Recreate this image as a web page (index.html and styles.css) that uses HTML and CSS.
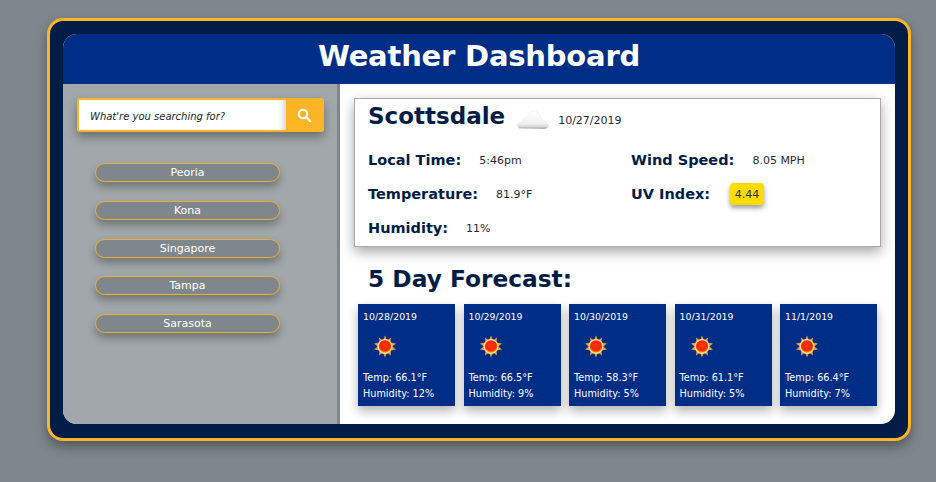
FILE: index.html
```html
<!DOCTYPE html>
<html lang="en">
<head>
<meta charset="utf-8">
<title>Weather Dashboard</title>
<link rel="stylesheet" href="styles.css">
</head>
<body>
<svg class="defs" width="0" height="0" aria-hidden="true">
  <defs>
    <radialGradient id="sunCore" cx="50%" cy="40%" r="60%">
      <stop offset="0" stop-color="#ff3a00"/>
      <stop offset="0.7" stop-color="#f52400"/>
      <stop offset="1" stop-color="#ffb000"/>
    </radialGradient>
    <linearGradient id="cloudFill" x1="0" y1="0" x2="0" y2="1">
      <stop offset="0" stop-color="#ffffff"/>
      <stop offset="0.7" stop-color="#f0f0f0"/>
      <stop offset="0.88" stop-color="#d8d8d8"/>
      <stop offset="1" stop-color="#8c8c8c"/>
    </linearGradient>
    <symbol id="sun" viewBox="0 0 24 24">
      <path d="M12 1l2 5 4-3-.6 5 5.600 1-3.800 3 3.800 3-5.600 1 .6 5-4-3-2 5-2-5-4 3 .6-5-5.600-1 3.800-3-3.800-3 5.600-1-.6-5 4 3z" fill="#e8a23c" transform="translate(0 -.5)"/>
      <circle cx="12" cy="11.500" r="7.400" fill="#ffe0a0"/>
      <circle cx="12" cy="11.500" r="6.200" fill="url(#sunCore)"/>
    </symbol>
  </defs>
</svg>
<main class="frame">
  <div class="inner">
    <header class="title-bar"><h1>Weather Dashboard</h1></header>
    <div class="columns">
      <aside class="sidebar">
        <form class="search">
          <div class="search-input">What're you searching for?</div>
          <div class="search-btn">
            <svg width="14" height="14" viewBox="0 0 14 14" aria-hidden="true">
              <circle cx="6" cy="6" r="4.200" fill="none" stroke="#fff" stroke-width="2"/>
              <path d="M9 9l4 4" stroke="#fff" stroke-width="2.400" stroke-linecap="round"/>
            </svg>
          </div>
        </form>
        <ul class="cities">
          <li class="city">Peoria</li>
          <li class="city">Kona</li>
          <li class="city">Singapore</li>
          <li class="city">Tampa</li>
          <li class="city">Sarasota</li>
        </ul>
      </aside>
      <section class="content">
        <div class="today">
          <div class="today-head">
            <h2>Scottsdale</h2>
            <svg class="cloud" width="32" height="22" viewBox="0 0 32 22" aria-hidden="true">
              <path d="M3.500 20.500C1.500 20.500.5 19 .5 17.500c0-2 2-3.500 4.500-3.800C6 10.500 8 9 10 9 11.500 5 14 3 17 3c3.500 0 6 2.500 7 6.500 1 1 1.500 2 1.600 3.500 3 .2 5.900 1.500 5.900 4.500 0 2-1.500 3.500-4.500 3.500z" fill="url(#cloudFill)" stroke="#ececec" stroke-width=".6"/>
            </svg>
            <span class="value date">10/27/2019</span>
          </div>
          <div class="stats">
            <div class="stat"><span class="label">Local Time:</span><span class="value">5:46pm</span></div>
            <div class="stat"><span class="label">Wind Speed:</span><span class="value">8.05 MPH</span></div>
            <div class="stat"><span class="label">Temperature:</span><span class="value">81.9°F</span></div>
            <div class="stat"><span class="label">UV Index:</span><span class="uv">4.44</span></div>
            <div class="stat"><span class="label">Humidity:</span><span class="value">11%</span></div>
          </div>
        </div>
        <h2 class="forecast-title">5 Day Forecast:</h2>
        <div class="forecast">
          <article class="day"><p class="day-date">10/28/2019</p><svg class="sun" width="24" height="24" aria-hidden="true"><use href="#sun"/></svg><p>Temp: 66.1°F</p><p>Humidity: 12%</p></article>
          <article class="day"><p class="day-date">10/29/2019</p><svg class="sun" width="24" height="24" aria-hidden="true"><use href="#sun"/></svg><p>Temp: 66.5°F</p><p>Humidity: 9%</p></article>
          <article class="day"><p class="day-date">10/30/2019</p><svg class="sun" width="24" height="24" aria-hidden="true"><use href="#sun"/></svg><p>Temp: 58.3°F</p><p>Humidity: 5%</p></article>
          <article class="day"><p class="day-date">10/31/2019</p><svg class="sun" width="24" height="24" aria-hidden="true"><use href="#sun"/></svg><p>Temp: 61.1°F</p><p>Humidity: 5%</p></article>
          <article class="day"><p class="day-date">11/1/2019</p><svg class="sun" width="24" height="24" aria-hidden="true"><use href="#sun"/></svg><p>Temp: 66.4°F</p><p>Humidity: 7%</p></article>
        </div>
      </section>
    </div>
  </div>
</main>
</body>
</html>
```
FILE: styles.css
```css
* { box-sizing: border-box; }
html, body { margin: 0; padding: 0; height: 100%; }
body {
  background: #7f878c;
  font-family: "DejaVu Sans", Verdana, sans-serif;
  overflow: hidden;
  padding: 18px 25px 0 47px;
}
.defs { position: absolute; }
.frame {
  height: 423px;
  border: 3px solid #fdb526;
  border-radius: 16px;
  background: #021d45;
  padding: 13px 13px 14px;
  box-shadow: 0 6px 12px rgba(0,0,0,.35);
}
.inner {
  height: 100%;
  border-radius: 14px;
  overflow: hidden;
  display: flex;
  flex-direction: column;
  background: #fff;
}
.title-bar {
  height: 50px;
  flex: none;
  background: #002e86;
  display: flex;
  align-items: center;
  justify-content: center;
  padding-bottom: 6px;
}
h1 {
  margin: 0;
  color: #fff;
  font-size: 29px;
  font-weight: 700;
  letter-spacing: -.2px;
}
.columns { flex: 1; display: flex; min-height: 0; }
.sidebar {
  width: 277px;
  flex: none;
  background: #a1a7aa;
  border-right: 3px solid #7f878c;
  padding: 14px 14px 0;
}
.search {
  display: flex;
  height: 34px;
  width: 247px;
  border: 2px solid #fdb526;
  border-radius: 3px;
  box-shadow: 0 5px 10px rgba(0,0,0,.35);
}
.search-input {
  flex: 1;
  background: #fff;
  padding: 1px 11px 0;
  font-size: 10px;
  font-style: italic;
  color: #1a1f29;
  line-height: 32px;
  box-shadow: inset -6px 0 6px -4px rgba(0,0,0,.2);
}
.search-btn {
  width: 36px;
  background: #fdb526;
  display: flex;
  align-items: center;
  justify-content: center;
}
.cities {
  list-style: none;
  margin: 31px 0 0 18px;
  padding: 0;
  display: flex;
  flex-direction: column;
  gap: 18.800px;
}
.city {
  width: 185px;
  height: 19px;
  border: 1px solid #eeb02e;
  border-radius: 10px;
  background: #7f878c;
  color: #fff;
  font-size: 11px;
  line-height: 17px;
  text-align: center;
  box-shadow: 0 5px 8px rgba(0,0,0,.3);
}
.content {
  flex: 1;
  padding: 14px 14px 0;
  min-width: 0;
}
.today {
  height: 149px;
  border: 1px solid #a8a8a8;
  background: #fff;
  padding: 0 13px;
  box-shadow: 0 5px 12px rgba(0,0,0,.35);
  color: #021d45;
}
.today-head { display: flex; align-items: center; height: 34px; }
h2 {
  margin: 0;
  font-size: 23px;
  font-weight: 700;
  color: #021d45;
}
.cloud { margin: 6px 0 0 12px; }
.date { margin: 9px 0 0 9px; }
.value { font-size: 11px; color: #1f2937; }
.stats {
  display: grid;
  grid-template-columns: 263px 1fr;
  grid-auto-rows: 34px;
  margin-top: 10px;
}
.stat { display: flex; align-items: center; height: 34px; }
.label {
  font-size: 14.500px;
  font-weight: 700;
  color: #021d45;
  margin-right: 18px;
}
.uv {
  background: #ffdb00;
  color: #333;
  font-size: 11px;
  margin-left: 2px;
  padding: 1px 4.500px 0;
  height: 22px;
  line-height: 22px;
  border-radius: 4px;
  box-shadow: 0 3px 5px rgba(0,0,0,.4);
}
.forecast-title { margin: 18px 0 0 14px; font-size: 23.300px; line-height: 28px; }
.forecast {
  display: flex;
  justify-content: space-between;
  margin: 11px 4px 0;
}
.day {
  width: 97px;
  height: 102px;
  background: #002e86;
  color: #fff;
  padding: 5px 5px 0;
  font-size: 9.700px;
  box-shadow: 0 5px 10px rgba(0,0,0,.3);
}
.day p { margin: 0; line-height: 16px; }
.day .day-date { height: 16px; font-size: 9.400px; }
.sun { display: block; margin: 10px 0 11px 10px; }
```
